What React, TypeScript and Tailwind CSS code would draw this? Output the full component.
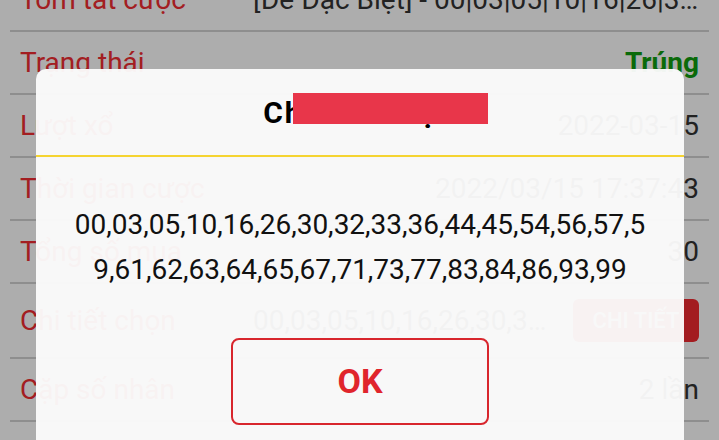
import React from "react";

type Row = { label: string; value?: string; kind?: "win" | "detail"; tall?: boolean };

const rows: Row[] = [
  { label: "Tóm tắt cược", value: "[Đề Đặc Biệt] - 00|03|05|10|16|26|30|32|33|36" },
  { label: "Trạng thái", value: "Trúng", kind: "win" },
  { label: "Lượt xổ", value: "2022-03-15" },
  { label: "Thời gian cược", value: "2022/03/15 17:37:43" },
  { label: "Tổng số mua", value: "30" },
  { label: "Chi tiết chọn", value: "00,03,05,10,16,26,30,32,33,36,44", kind: "detail", tall: true },
  { label: "Cặp số nhân", value: "2 lần" },
  { label: "", value: "" },
];

export default function App() {
  return (
    <div className="relative h-[440px] w-[719px] overflow-hidden bg-white font-['Roboto',sans-serif]">
      <div className="-mt-[31px] px-[10px]">
        {rows.map((r, i) => (
          <div
            key={i}
            className={`flex items-center border-b-2 border-[#d2d2d2] px-[10px] text-[28px] ${
              r.tall ? "h-[75px]" : "h-[63px]"
            }`}
          >
            <div className="w-[233px] shrink-0 whitespace-nowrap text-[#f02d32]">{r.label}</div>
            {r.kind === "detail" ? (
              <div className="flex min-w-0 flex-1 items-center gap-[20px]">
                <div className="min-w-0 flex-1 truncate text-[#333]">{r.value}</div>
                <div className="flex h-[43px] w-[126px] shrink-0 items-center justify-center rounded-[6px] bg-[#f02a30] text-[22px] font-medium text-white">
                  CHI TIẾT
                </div>
              </div>
            ) : (
              <div
                className={`min-w-0 flex-1 truncate text-right ${
                  r.kind === "win" ? "font-bold text-[#109c10]" : "text-[#333]"
                }`}
              >
                {r.value}
              </div>
            )}
          </div>
        ))}
      </div>

      <div className="absolute inset-0 bg-black/[0.32]" />

      <div className="absolute left-[36px] top-[69px] h-[420px] w-[648px] rounded-[10px] bg-[#fbfbfb]/[0.96]">
        <div className="relative flex h-[88px] items-center justify-center border-b-2 border-[#f5d431]">
          <span className="text-[30px] font-bold tracking-[1.8px] text-black">Chi tiết chọn</span>
          <div className="absolute left-[257px] top-[24px] h-[31px] w-[195px] bg-[#e8364a]" />
        </div>
        <div className="pt-[45px] text-center text-[28px] leading-[45px] text-[#111]">
          <div className="whitespace-nowrap">00,03,05,10,16,26,30,32,33,36,44,45,54,56,57,5</div>
          <div className="whitespace-nowrap">9,61,62,63,64,65,67,71,73,77,83,84,86,93,99</div>
        </div>
        <div className="mx-auto mt-[46px] flex h-[87px] w-[258px] items-center justify-center rounded-[8px] border-2 border-[#d8262d] text-[34px] font-bold text-[#e0252c]">
          OK
        </div>
      </div>
    </div>
  );
}
